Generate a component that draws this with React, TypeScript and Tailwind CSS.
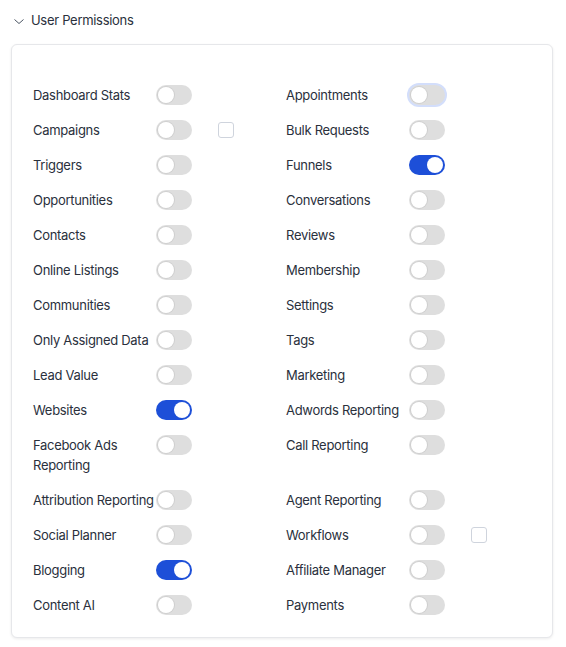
import React from 'react';

type Perm = { label: string; on?: boolean; box?: boolean; focus?: boolean; nowrap?: boolean };

const left: Perm[] = [
  { label: 'Dashboard Stats' },
  { label: 'Campaigns', box: true },
  { label: 'Triggers' },
  { label: 'Opportunities' },
  { label: 'Contacts' },
  { label: 'Online Listings' },
  { label: 'Communities' },
  { label: 'Only Assigned Data' },
  { label: 'Lead Value' },
  { label: 'Websites', on: true },
  { label: 'Facebook Ads Reporting' },
  { label: 'Attribution Reporting', nowrap: true },
  { label: 'Social Planner' },
  { label: 'Blogging', on: true },
  { label: 'Content AI' },
];

const right: Perm[] = [
  { label: 'Appointments', focus: true },
  { label: 'Bulk Requests' },
  { label: 'Funnels', on: true },
  { label: 'Conversations' },
  { label: 'Reviews' },
  { label: 'Membership' },
  { label: 'Settings' },
  { label: 'Tags' },
  { label: 'Marketing' },
  { label: 'Adwords Reporting' },
  { label: 'Call Reporting' },
  { label: 'Agent Reporting' },
  { label: 'Workflows', box: true },
  { label: 'Affiliate Manager' },
  { label: 'Payments' },
];

const Toggle = ({ on, focus }: { on?: boolean; focus?: boolean }) => (
  <span
    className={`relative inline-flex h-5 w-9 shrink-0 items-center rounded-full ${
      on ? 'bg-[#1d4fd8]' : 'bg-[#dedede]'
    } ${focus ? 'ring-2 ring-[#d3defb]' : ''}`}
  >
    <span
      className={`absolute top-[2px] h-4 w-4 rounded-full bg-white ${
        on ? 'left-[18px]' : 'left-[2px] shadow-[0_0_0_1px_#cfcfcf]'
      }`}
    />
  </span>
);

const Row = ({ p }: { p: Perm }) => (
  <div className="flex items-start">
    <span
      className={`w-[123px] shrink-0 text-[13px] leading-5 tracking-[-0.3px] text-[#2a303c] ${
        p.nowrap ? 'whitespace-nowrap' : ''
      }`}
    >
      {p.label}
    </span>
    <Toggle on={p.on} focus={p.focus} />
    {p.box && <span className="ml-[26px] mt-[2px] h-4 w-4 rounded-[3px] border border-[#cfd4dd] bg-white" />}
  </div>
);

export default function App() {
  return (
    <div className="min-h-screen bg-white font-['Inter',sans-serif]">
      {/* Section header */}
      <div className="flex items-center gap-[6px] pl-[13px] pt-[9px] h-[33px]">
        <svg width="12" height="12" viewBox="0 0 12 12" fill="none" stroke="#4b5563" strokeWidth="1">
          <path d="M1.5 4.5l4.5 4 4.5-4" />
        </svg>
        <span className="text-[13px] tracking-[-0.3px] text-[#2a303c]">User Permissions</span>
      </div>

      {/* Card */}
      <div className="mx-[11px] mt-[11px] w-[542px] rounded-md border border-[#e6e7ea] bg-white pl-[21px] pt-[40px] pb-[22px] shadow-[0_1px_3px_rgba(0,0,0,0.08)]">
        <div className="grid grid-cols-[253px_253px] gap-y-[15px]">
          {left.map((p, i) => (
            <React.Fragment key={p.label}>
              <Row p={p} />
              <Row p={right[i]} />
            </React.Fragment>
          ))}
        </div>
      </div>
    </div>
  );
}
